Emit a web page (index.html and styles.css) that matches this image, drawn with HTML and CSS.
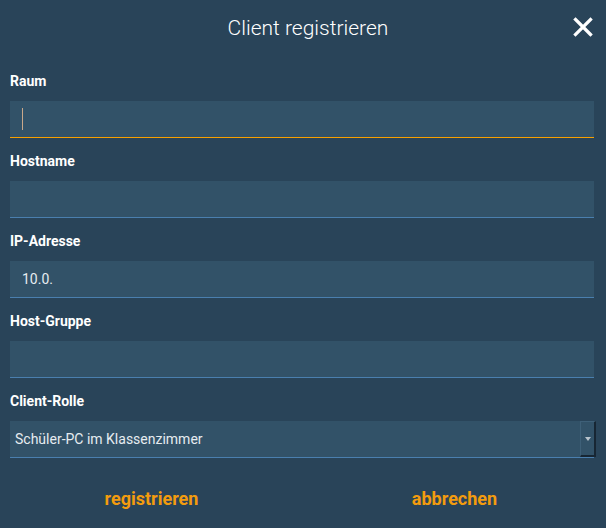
FILE: index.html
```html
<!DOCTYPE html>
<html lang="de">
<head>
<meta charset="utf-8">
<title>Client registrieren</title>
<link rel="stylesheet" href="styles.css">
</head>
<body>
<div class="dialog">
  <header class="header">
    <h1 class="title">Client registrieren</h1>
    <button class="close" aria-label="Schließen">
      <svg width="20" height="20" viewBox="0 0 20 20"><path d="M2.5 2.5 L17.5 17.5 M17.5 2.5 L2.5 17.5" stroke="#ffffff" stroke-width="3.2" stroke-linecap="square" fill="none"/></svg>
    </button>
  </header>
  <form class="form">
    <div class="group">
      <label class="label">Raum</label>
      <div class="box box-active">
        <span class="caret"></span>
      </div>
    </div>
    <div class="group">
      <label class="label">Hostname</label>
      <div class="box"></div>
    </div>
    <div class="group">
      <label class="label">IP-Adresse</label>
      <div class="box"><span class="value">10.0.</span></div>
    </div>
    <div class="group">
      <label class="label">Host-Gruppe</label>
      <div class="box"></div>
    </div>
    <div class="group">
      <label class="label">Client-Rolle</label>
      <div class="box select">
        <span class="select-value">Schüler-PC im Klassenzimmer</span>
        <span class="select-btn"><span class="arrow"></span></span>
      </div>
    </div>
    <div class="actions">
      <button type="button" class="action">registrieren</button>
      <button type="button" class="action">abbrechen</button>
    </div>
  </form>
</div>
</body>
</html>
```
FILE: styles.css
```css
html, body {
  margin: 0;
  padding: 0;
  background: #294459;
  height: 100%;
}
body {
  font-family: Roboto, "Liberation Sans", sans-serif;
  color: #ffffff;
}
.dialog {
  padding: 0 12px 0 10px;
}
.header {
  height: 56px;
  display: flex;
  align-items: center;
  justify-content: center;
  position: relative;
  margin-bottom: 14px;
}
.title {
  margin: 0;
  font-size: 21px;
  font-weight: 300;
  color: #ffffff;
  padding-left: 12px;
}
.close {
  position: absolute;
  right: 1px;
  top: 17px;
  width: 20px;
  height: 20px;
  padding: 0;
  border: 0;
  background: none;
  display: block;
}
.close svg { display: block; }
.form {
  display: flex;
  flex-direction: column;
}
.group {
  display: flex;
  flex-direction: column;
  margin-bottom: 12px;
}
.label {
  font-size: 14px;
  font-weight: 700;
  line-height: 20px;
  margin-top: 1px;
  margin-bottom: 10px;
  color: #ffffff;
}
.box {
  position: relative;
  display: flex;
  align-items: center;
  height: 36px;
  padding: 0 12px;
  background: #325268;
  box-shadow: 0 1px 0 0 #4a7fae;
  margin-bottom: 1px;
  color: #e6ecf0;
  font-size: 14px;
}
.box-active {
  box-shadow: 0 1px 0 0 #f7a000;
}
.caret {
  width: 1px;
  height: 22px;
  background: #c9a88a;
}
.select {
  padding: 0;
}
.select-value {
  flex: 1;
  padding-left: 5px;
  font-size: 14px;
  color: #e6ecf0;
}
.select-btn {
  align-self: flex-start;
  width: 16px;
  height: 36px;
  box-sizing: border-box;
  border-left: 1px solid #3e6078;
  border-top: 1px solid #3e6078;
  border-right: 2px solid #172633;
  border-bottom: 2px solid #172633;
  display: flex;
  align-items: center;
  justify-content: center;
  margin-right: -2px;
}
.arrow {
  width: 0;
  height: 0;
  border-left: 3.5px solid transparent;
  border-right: 3.5px solid transparent;
  border-top: 4px solid #b9c4cc;
  margin-top: 1px;
}
.actions {
  display: flex;
  height: 40px;
  margin-top: 8px;
  margin-right: -12px;
  margin-left: -10px;
}
.action {
  flex: 1;
  background: none;
  border: 0;
  padding: 0;
  font-family: inherit;
  font-size: 18px;
  font-weight: 700;
  color: #f39c0e;
}
```
